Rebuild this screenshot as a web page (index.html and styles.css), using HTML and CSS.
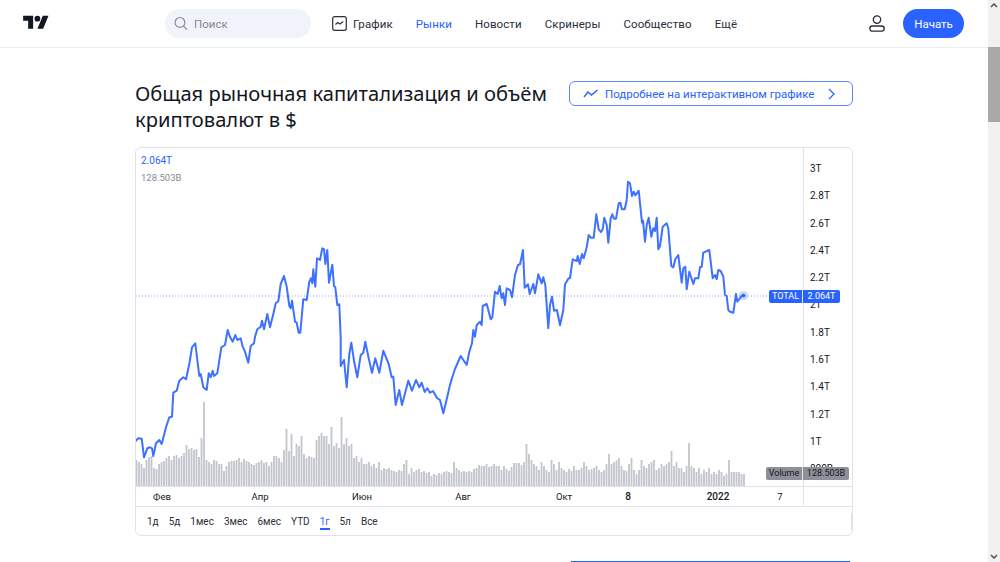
FILE: index.html
```html
<!DOCTYPE html>
<html lang="ru">
<head>
    <meta charset="UTF-8">
    <meta name="viewport" content="width=device-width, initial-scale=1.0">
    <title>Общая рыночная капитализация</title>
    <link rel="stylesheet" href="styles.css">
</head>
<body>
    <div class="page">
        <header class="header">
            <svg class="logo" viewBox="0 0 36 28"><path d="M14 22H7V11H0V4h14v18zM28 22h-8l7.5-18h8L28 22z"/><circle cx="20" cy="8" r="4"/></svg>
            <div class="search">
                <svg class="search-icon" viewBox="0 0 16 16"><circle cx="6.8" cy="6.8" r="5.6"/><path d="M10.8 10.8L15 15"/></svg>
                <span>Поиск</span>
            </div>
            <nav class="nav">
                <a class="nav-chart">
                    <svg class="chart-icon" viewBox="0 0 15 15"><rect x=".7" y=".7" width="13.6" height="13.6" rx="2"/><path d="M3.5 8.5l2.2-2 2.3 1.5 3.2-2.5"/></svg>
                    График
                </a>
                <a class="active">Рынки</a>
                <a>Новости</a>
                <a>Скринеры</a>
                <a>Сообщество</a>
                <a>Ещё</a>
            </nav>
            <div class="header-right">
                <svg class="user-icon" viewBox="0 0 16 17"><circle cx="8" cy="4.6" r="3.7"/><rect x=".8" y="11" width="14.4" height="5.2" rx="2.6"/></svg>
                <button class="start-btn">Начать</button>
            </div>
        </header>

        <main class="main">
            <div class="title-row">
                <h1>Общая рыночная капитализация и объём криптовалют в $</h1>
                <a class="more-btn">
                    <svg class="more-icon" viewBox="0 0 16 9"><path d="M1 8l4-5 3.500 3L14.500 1"/></svg>
                    <span>Подробнее на интерактивном графике</span>
                    <svg class="more-arrow" viewBox="0 0 7 12"><path d="M1 1l5 5-5 5"/></svg>
                </a>
            </div>

            <section class="card">
                <div class="chart-row">
                    <div class="pane">
                        <div class="legend">
                            <div class="legend-main">2.064T</div>
                            <div class="legend-vol">128.503B</div>
                        </div>
                        <svg class="plot" viewBox="136 148 667 338">
                            <path class="vol" d="M136.500 486v-26m2.500 26v-24m2.500 24v-22m2.500 22v-18m2.500 18v-26m2.500 26v-29m2.500 29v-30m2.500 30v-18m2.500 18v-17m2.500 17v-22m2.500 22v-24m2.500 24v-25m2.500 25v-28m2.500 28v-30m2.500 30v-26m2.500 26v-30m2.500 30v-31m2.500 31v-28m2.500 28v-30m2.500 30v-33m2.500 33v-41m2.500 41v-37m2.500 37v-38m2.500 38v-36m2.500 36v-37m2.500 37v-29m2.500 29v-48m2.500 48v-84m2.500 84v-26m2.500 26v-24m2.500 24v-22m2.500 22v-26m2.500 26v-25m2.500 25v-22m2.500 22v-22m2.500 22v-15m2.500 15v-20m2.500 20v-24m2.500 24v-25m2.500 25v-25m2.500 25v-26m2.500 26v-28m2.500 28v-24m2.500 24v-27m2.500 27v-25m2.500 25v-24m2.500 24v-22m2.500 22v-21m2.500 21v-23m2.500 23v-24m2.500 24v-26m2.500 26v-23m2.500 23v-24m2.500 24v-20m2.500 20v-24m2.500 24v-30m2.500 30v-30m2.500 30v-28m2.500 28v-24m2.500 24v-36m2.500 36v-57m2.500 57v-35m2.500 35v-52m2.500 52v-30m2.500 30v-42m2.500 42v-40m2.500 40v-50m2.500 50v-32m2.500 32v-28m2.500 28v-30m2.500 30v-29m2.500 29v-28m2.500 28v-46m2.500 46v-50m2.500 50v-53m2.500 53v-50m2.500 50v-50m2.500 50v-42m2.500 42v-59m2.500 59v-40m2.500 40v-43m2.500 43v-38m2.500 38v-69m2.500 69v-42m2.500 42v-48m2.500 48v-40m2.500 40v-42m2.500 42v-28m2.500 28v-30m2.500 30v-24m2.500 24v-28m2.500 28v-22m2.500 22v-22m2.500 22v-24m2.500 24v-20m2.500 20v-22m2.500 22v-18m2.500 18v-24m2.500 24v-16m2.500 16v-18m2.500 18v-17m2.500 17v-18m2.500 18v-16m2.500 16v-15m2.500 15v-14m2.500 14v-16m2.500 16v-15m2.500 15v-22m2.500 22v-26m2.500 26v-12m2.500 12v-18m2.500 18v-14m2.500 14v-16m2.500 16v-17m2.500 17v-14m2.500 14v-15m2.500 15v-13m2.500 13v-14m2.500 14v-10m2.500 10v-12m2.500 12v-11m2.500 11v-13m2.500 13v-12m2.500 12v-14m2.500 14v-15m2.500 15v-14m2.500 14v-13m2.500 13v-24m2.500 24v-18m2.500 18v-16m2.500 16v-14m2.500 14v-15m2.500 15v-14m2.500 14v-15m2.500 15v-14m2.500 14v-17m2.500 17v-18m2.500 18v-21m2.500 21v-20m2.500 20v-20m2.500 20v-22m2.500 22v-19m2.500 19v-20m2.500 20v-22m2.500 22v-20m2.500 20v-20m2.500 20v-16m2.500 16v-20m2.500 20v-17m2.500 17v-15m2.500 15v-19m2.500 19v-23m2.500 23v-23m2.500 23v-23m2.500 23v-21m2.500 21v-24m2.500 24v-42m2.500 42v-32m2.500 32v-26m2.500 26v-22m2.500 22v-20m2.500 20v-16m2.500 16v-24m2.500 24v-20m2.500 20v-16m2.500 16v-14m2.500 14v-26m2.500 26v-22m2.500 22v-16m2.500 16v-24m2.500 24v-18m2.500 18v-16m2.500 16v-14m2.500 14v-17m2.500 17v-15m2.500 15v-20m2.500 20v-16m2.500 16v-16m2.500 16v-18m2.500 18v-24m2.500 24v-20m2.500 20v-16m2.500 16v-17m2.500 17v-18m2.500 18v-20m2.500 20v-16m2.500 16v-14m2.500 14v-16m2.500 16v-22m2.500 22v-32m2.500 32v-22m2.500 22v-24m2.500 24v-26m2.500 26v-28m2.500 28v-20m2.500 20v-16m2.500 16v-15m2.500 15v-22m2.500 22v-28m2.500 28v-16m2.500 16v-12m2.500 12v-16m2.500 16v-26m2.500 26v-20m2.500 20v-18m2.500 18v-22m2.500 22v-24m2.500 24v-26m2.500 26v-16m2.500 16v-18m2.500 18v-22m2.500 22v-20m2.500 20v-22m2.500 22v-24m2.500 24v-35m2.500 35v-20m2.500 20v-24m2.500 24v-18m2.500 18v-18m2.500 18v-14m2.500 14v-20m2.500 20v-43m2.500 43v-20m2.500 20v-18m2.500 18v-14m2.500 14v-18m2.500 18v-12m2.500 12v-16m2.500 16v-14m2.500 14v-18m2.500 18v-12m2.500 12v-14m2.500 14v-12m2.500 12v-16m2.500 16v-14m2.500 14v-10m2.500 10v-12m2.500 12v-26m2.500 26v-14m2.500 14v-14m2.500 14v-14m2.500 14v-14m2.500 14v-12m2.500 12v-12"/>
                            <path class="last-line" d="M136 296H770"/>
                            <polyline class="line" points="135,441.700 138.300,438.300 141.700,438.700 144,457.300 147.300,448.300 150,447.300 152,448.300 153.300,456 156,443.300 159.300,440 161.700,444 166,427.300 169.300,417.300 172,416.700 173.300,392.700 176.700,390.700 179.300,380.700 183.300,377.300 186,379.300 189.300,364 192,347.300 195.300,343.300 199.300,376 200.700,374 203.300,387.300 206.700,390 208.700,373.300 210.700,377.300 212.700,370.700 214,376 217.300,373.300 221.300,347.300 225,345 227.700,330 230,336.700 232.700,341.700 235.300,335 237.300,340 240.700,338.300 242.700,346.700 245,351.700 248.300,362.700 250.700,346 254,343.300 255,336.700 257.300,329.300 260.700,326.700 262,320.700 264,329.300 267.300,314 270,327.300 273.300,314 275.700,303.300 278.300,301.300 280.700,284 284,276 286.700,286.700 289.300,306 290.700,308.300 292,300.700 295,321.700 296.700,322.700 298.700,332.700 300.300,332.700 303.300,299.300 306.700,300 309.300,281.700 311,278.300 312.300,283.300 313.300,269.300 315.300,286.700 317,258.300 320,260 322.300,248.300 324,249.300 325.300,264 327.300,250 329,282.700 332.300,264.700 334,286 335.300,287.300 337.300,305 339.300,304.300 340.700,338 340.700,366 344,360 346.700,387.300 349.300,354 351.300,342.700 354,360.700 357.300,377.300 360.700,355 363.300,352.700 365.300,341.700 368.700,358.300 372,372.700 375.300,358.300 379.300,372.700 383.300,350.700 388.700,364 391.700,377.300 393.300,376.700 395.700,405 399.300,390 402,405 408.300,380.700 412,390.700 416,380 419.300,387.300 421.700,382.700 424.700,392 427.300,388.300 430,392.700 433,391 437,398 440,400 443.300,413.300 447,398 450,385 452,378 455,369 460.700,356 466.700,365 469.300,351.700 472,343.300 473.300,330 475,336.700 476.700,325 480,321.700 481.700,325 482.700,306 486.700,304 490.700,319.300 492.300,317.300 495,291.700 497.700,294 499.700,286 501.700,298.300 503.300,293.300 505,305 506.700,288.300 510,290 512,297.300 515,275 518,265 520,264.300 523,250 524.700,287.700 528,284.300 529.700,294 533.300,284 535,293.300 538.300,274.300 541.700,283.300 543.300,277.300 545.300,285 548.300,328.300 550,305 552,296.700 554,310.700 557,310 560,325.300 563.300,310 565,284.300 568.300,278.700 570,278 572.700,259.300 576.700,261 577.700,256 579.700,264 582,254 583.700,258.300 586.700,247.300 588.700,235 590.700,237.700 593.700,237.700 596.300,214.300 598.700,229.300 601,232 602.700,229.300 604.300,217.700 606.700,225 608.300,242.700 610.700,218.300 612.300,214.300 614,218.700 616,218.700 618.700,203.300 620.300,202.700 622,209.300 624.700,209.300 626.700,200 628,181.700 630,183.300 632,196 633.700,191.700 635.300,195.300 638.700,190.700 642,222.700 643,220.700 645,241.700 646.700,225 648.700,217.700 651.300,236.700 653.300,228.300 655,231 656.700,217.700 658.300,249.300 660,246 662.700,226.700 666.700,223.300 668.300,228.300 671.300,266 673.300,267.300 675.300,259.300 678.300,255 681.700,282.700 683.300,268.300 685.300,266.700 686.700,289.300 689.300,271.700 693.300,284 695,278.300 698.300,278.300 700,267.300 701.700,266.700 703.300,252.700 709.300,250 712.700,278.300 715,275 716.700,279 718.300,270 720.700,271 723.300,276.700 725,295 726.700,296 728.300,310 730,311.700 733.300,312.700 736,294 737.300,301.700 741.700,296 744,295.300"/>
                            <circle class="halo" cx="743.500" cy="295.500" r="4.500"/>
                            <circle class="dot" cx="743.500" cy="295.500" r="1.800"/>
                        </svg>
                    </div>
                    <div class="price-axis">
                        <span>3T</span><span>2.8T</span><span>2.6T</span><span>2.4T</span>
                        <span>2.2T</span><span>2T</span><span>1.8T</span><span>1.6T</span>
                        <span>1.4T</span><span>1.2T</span><span>1T</span><span>800B</span>
                    </div>
                    <div class="tag tag-total">
                        <span class="tag-name">TOTAL</span>
                        <span class="tag-value">2.064T</span>
                    </div>
                    <div class="tag tag-volume">
                        <span class="tag-name">Volume</span>
                        <span class="tag-value">128.503B</span>
                    </div>
                </div>

                <div class="time-row">
                    <svg class="time-axis" viewBox="136 487 667 19">
                        <text x="162" y="499.500">Фев</text>
                        <text x="260" y="499.500">Апр</text>
                        <text x="362" y="499.500">Июн</text>
                        <text x="463" y="499.500">Авг</text>
                        <text x="564" y="499.500">Окт</text>
                        <text x="628" y="499.500" class="bold">8</text>
                        <text x="718" y="499.500" class="bold">2022</text>
                        <text x="780" y="499.500">7</text>
                    </svg>
                    <div class="time-corner"></div>
                </div>

                <div class="ranges">
                    <a>1д</a><a>5д</a><a>1мес</a><a>3мес</a><a>6мес</a><a>YTD</a>
                    <a class="active">1г</a><a>5л</a><a>Все</a>
                    <i class="ranges-end"></i>
                </div>
            </section>

            <div class="next-btn"></div>
        </main>
    </div>

    <aside class="scrollbar">
        <svg class="scroll-arrow" viewBox="0 0 8 5"><path d="M1 4l3-3 3 3"/></svg>
        <div class="scroll-thumb"></div>
        <svg class="scroll-arrow down" viewBox="0 0 8 5"><path d="M1 1l3 3 3-3"/></svg>
    </aside>
</body>
</html>
```

FILE: styles.css
```css
* {
    box-sizing: border-box;
}
body {
    margin: 0;
    height: 562px;
    overflow: hidden;
    display: flex;
    background: #fff;
    color: #131722;
    font-family: Roboto, "Noto Sans", sans-serif;
}
.page {
    flex: 1;
    min-width: 0;
}

/* header */
.header {
    height: 48px;
    display: flex;
    align-items: center;
    padding: 0 24px 0 23px;
    border-bottom: 1px solid #e9ecf2;
}
.logo {
    width: 26px;
    height: 20px;
    margin-top: -1px;
    fill: #131722;
}
.search {
    width: 146px;
    height: 29px;
    margin: 0 21px 0 116px;
    padding-left: 9px;
    display: flex;
    align-items: center;
    gap: 6px;
    border-radius: 15px;
    background: #f0f3fa;
    color: #868993;
    font-size: 11.500px;
}
.search-icon {
    width: 14px;
    height: 15px;
    fill: none;
    stroke: #868993;
    stroke-width: 1.300;
}
.nav {
    display: flex;
    align-items: center;
    gap: 23px;
    font-size: 11.500px;
    letter-spacing: .1px;
    color: #2a2e39;
}
.nav .active {
    color: #2962ff;
}
.nav-chart {
    display: flex;
    align-items: center;
    gap: 6px;
}
.chart-icon {
    width: 15px;
    height: 15px;
    fill: none;
    stroke: #2a2e39;
    stroke-width: 1.200;
}
.header-right {
    margin-left: auto;
    display: flex;
    align-items: center;
    gap: 18px;
}
.user-icon {
    width: 16px;
    height: 17px;
    fill: none;
    stroke: #2a2e39;
    stroke-width: 1.300;
}
.start-btn {
    width: 61px;
    height: 29px;
    padding: 0;
    border: none;
    border-radius: 15px;
    background: #2962ff;
    color: #fff;
    font: 11.500px Roboto, sans-serif;
}

/* title */
.main {
    width: 718px;
    margin-left: 135px;
}
.title-row {
    height: 99px;
    padding-top: 33px;
    display: flex;
    justify-content: space-between;
    align-items: flex-start;
}
h1 {
    width: 425px;
    margin: -1px 0 0;
    font-size: 20.150px;
    font-weight: 400;
    line-height: 26px;
    color: #131722;
    font-family: "Noto Sans", sans-serif;
}
.more-btn {
    flex: none;
    width: 284px;
    height: 25px;
    padding: 0 17px 0 13px;
    display: flex;
    align-items: center;
    border: 1px solid #5a86ff;
    border-radius: 6px;
    color: #2962ff;
    font-size: 11.500px;
    white-space: nowrap;
}
.more-icon {
    flex: none;
    width: 16px;
    height: 9px;
    margin-right: 6px;
    fill: none;
    stroke: #2962ff;
    stroke-width: 1.400;
}
.more-arrow {
    flex: none;
    width: 7px;
    height: 12px;
    margin-left: auto;
    fill: none;
    stroke: #2962ff;
    stroke-width: 1.200;
}

/* chart card */
.card {
    height: 389px;
    border: 1px solid #e0e3eb;
    border-radius: 6px;
    display: flex;
    flex-direction: column;
}
.chart-row {
    position: relative;
    flex: none;
    height: 339px;
    display: flex;
    border-bottom: 1px solid #e0e3eb;
}
.pane {
    position: relative;
    width: 667px;
}
.plot {
    display: block;
    width: 667px;
    height: 338px;
}
.vol {
    fill: none;
    stroke: #c3c5cc;
    stroke-width: 1.800;
}
.last-line {
    fill: none;
    stroke: #2962ff;
    stroke-opacity: .5;
    stroke-dasharray: 1 2;
}
.line {
    fill: none;
    stroke: #2962ff;
    stroke-opacity: .9;
    stroke-width: 2;
    stroke-linejoin: round;
}
.halo {
    fill: #2962ff;
    fill-opacity: .25;
}
.dot {
    fill: #2962ff;
}
.legend {
    position: absolute;
    top: 4px;
    left: 5px;
    font-size: 10px;
    line-height: 17px;
}
.legend-main {
    color: #2962ff;
}
.legend-vol {
    color: #868993;
    font-size: 9.500px;
}
.price-axis {
    flex: 1;
    padding: 7px 0 0 6px;
    display: flex;
    flex-direction: column;
    border-left: 1px solid #e0e3eb;
    font-size: 10px;
    overflow: hidden;
}
.price-axis span {
    flex: none;
    height: 27.300px;
    line-height: 27.300px;
}
.tag {
    position: absolute;
    display: flex;
    font-size: 9px;
    line-height: 13px;
    text-align: center;
    border-radius: 2px;
}
.tag-total {
    top: 142px;
    left: 633px;
    background: #2962ff;
    color: #fff;
}
.tag-total .tag-name {
    width: 34px;
    border-right: 1px solid #e0e3eb;
}
.tag-total .tag-value {
    width: 37px;
}
.tag-volume {
    top: 319px;
    left: 630px;
    background: #8e9099;
    color: #131722;
}
.tag-volume .tag-name {
    width: 37px;
    border-right: 1px solid #e0e3eb;
}
.tag-volume .tag-value {
    width: 46px;
}
.time-row {
    flex: none;
    height: 20px;
    display: flex;
    border-bottom: 1px solid #e0e3eb;
}
.time-axis {
    display: block;
    width: 667px;
    height: 19px;
    flex: none;
}
.time-axis text {
    font-size: 9.500px;
    text-anchor: middle;
    fill: #131722;
}
.time-axis .bold {
    font-weight: 500;
    font-size: 10px;
}
.time-corner {
    flex: 1;
    border-left: 1px solid #e0e3eb;
}
.ranges {
    flex: 1;
    padding-left: 11px;
    display: flex;
    align-items: center;
    gap: 10px;
    font-size: 10px;
    color: #2a2e39;
}
.ranges a {
    position: relative;
}
.ranges .active {
    color: #2962ff;
}
.ranges .active::after {
    content: "";
    position: absolute;
    left: 0;
    right: 0;
    bottom: -3px;
    height: 2px;
    background: #2962ff;
}
.ranges-end {
    width: 1px;
    height: 17px;
    margin-left: auto;
    background: #e0e3eb;
}
.next-btn {
    width: 279px;
    height: 1px;
    margin: 25px 0 0 436px;
    border-top: 1px solid #2962ff;
}

/* scrollbar */
.scrollbar {
    flex: none;
    width: 12px;
    display: flex;
    flex-direction: column;
    align-items: center;
    background: #f1f1f1;
}
.scroll-arrow {
    width: 8px;
    height: 5px;
    margin-top: 3px;
    fill: none;
    stroke: #505050;
    stroke-width: 1.500;
}
.scroll-arrow.down {
    margin: auto 0 3px;
}
.scroll-thumb {
    width: 100%;
    height: 75px;
    margin-top: 39px;
    background: #a8a8a8;
}
```
